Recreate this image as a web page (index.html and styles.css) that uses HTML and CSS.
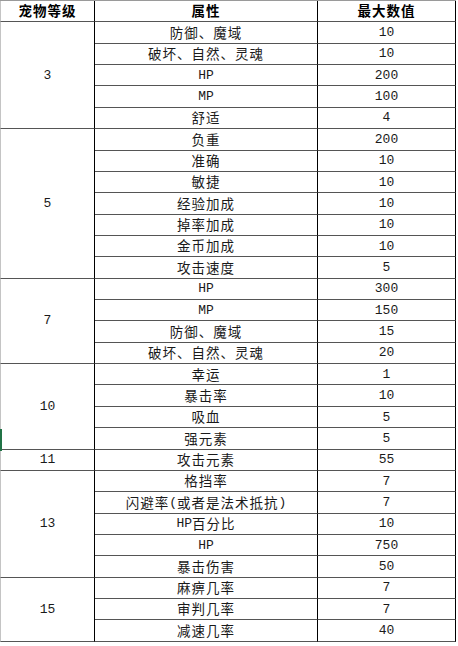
FILE: index.html
```html
<!DOCTYPE html>
<html lang="zh-CN">
<head>
<meta charset="utf-8">
<title>宠物等级属性</title>
<link rel="stylesheet" href="styles.css">
</head>
<body>
<div class="sheet">
  <div class="cell c1 head">宠物等级</div>
  <div class="cell c2 head">属性</div>
  <div class="cell c3 head">最大数值</div>

  <div class="cell c1 span5"><span class="lat">3</span></div>
  <div class="cell c2">防御、魔域</div><div class="cell c3"><span class="lat">10</span></div>
  <div class="cell c2">破坏、自然、灵魂</div><div class="cell c3"><span class="lat">10</span></div>
  <div class="cell c2"><span class="lat">HP</span></div><div class="cell c3"><span class="lat">200</span></div>
  <div class="cell c2"><span class="lat">MP</span></div><div class="cell c3"><span class="lat">100</span></div>
  <div class="cell c2">舒适</div><div class="cell c3"><span class="lat">4</span></div>

  <div class="cell c1 span7"><span class="lat">5</span></div>
  <div class="cell c2">负重</div><div class="cell c3"><span class="lat">200</span></div>
  <div class="cell c2">准确</div><div class="cell c3"><span class="lat">10</span></div>
  <div class="cell c2">敏捷</div><div class="cell c3"><span class="lat">10</span></div>
  <div class="cell c2">经验加成</div><div class="cell c3"><span class="lat">10</span></div>
  <div class="cell c2">掉率加成</div><div class="cell c3"><span class="lat">10</span></div>
  <div class="cell c2">金币加成</div><div class="cell c3"><span class="lat">10</span></div>
  <div class="cell c2">攻击速度</div><div class="cell c3"><span class="lat">5</span></div>

  <div class="cell c1 span4"><span class="lat">7</span></div>
  <div class="cell c2"><span class="lat">HP</span></div><div class="cell c3"><span class="lat">300</span></div>
  <div class="cell c2"><span class="lat">MP</span></div><div class="cell c3"><span class="lat">150</span></div>
  <div class="cell c2">防御、魔域</div><div class="cell c3"><span class="lat">15</span></div>
  <div class="cell c2">破坏、自然、灵魂</div><div class="cell c3"><span class="lat">20</span></div>

  <div class="cell c1 span4"><span class="lat">10</span></div>
  <div class="cell c2">幸运</div><div class="cell c3"><span class="lat">1</span></div>
  <div class="cell c2">暴击率</div><div class="cell c3"><span class="lat">10</span></div>
  <div class="cell c2">吸血</div><div class="cell c3"><span class="lat">5</span></div>
  <div class="cell c2">强元素</div><div class="cell c3"><span class="lat">5</span></div>

  <div class="cell c1"><span class="lat">11</span></div>
  <div class="cell c2">攻击元素</div><div class="cell c3"><span class="lat">55</span></div>

  <div class="cell c1 span5"><span class="lat">13</span></div>
  <div class="cell c2">格挡率</div><div class="cell c3"><span class="lat">7</span></div>
  <div class="cell c2">闪避率<span class="lat">(</span>或者是法术抵抗<span class="lat">)</span></div><div class="cell c3"><span class="lat">7</span></div>
  <div class="cell c2"><span class="lat">HP</span>百分比</div><div class="cell c3"><span class="lat">10</span></div>
  <div class="cell c2"><span class="lat">HP</span></div><div class="cell c3"><span class="lat">750</span></div>
  <div class="cell c2">暴击伤害</div><div class="cell c3"><span class="lat">50</span></div>

  <div class="cell c1 span3"><span class="lat">15</span></div>
  <div class="cell c2">麻痹几率</div><div class="cell c3"><span class="lat">7</span></div>
  <div class="cell c2">审判几率</div><div class="cell c3"><span class="lat">7</span></div>
  <div class="cell c2">减速几率</div><div class="cell c3"><span class="lat">40</span></div>

  <div class="marker"></div>
</div>
</body>
</html>
```

FILE: styles.css
```css
html, body {
  margin: 0;
  padding: 0;
  background: #ffffff;
}

body {
  font-family: "Noto Sans CJK SC", "Noto Sans", sans-serif;
  font-size: 13.5px;
  letter-spacing: 1px;
  color: #1a1a1a;
}

.sheet {
  position: relative;
  display: grid;
  grid-template-columns: 95px 223px 138px;
  grid-template-rows: repeat(30, 21.37px);
  width: 456px;
  border-top: 1px solid #9a9a9a;
}

.cell {
  display: flex;
  align-items: center;
  justify-content: center;
  line-height: 1;
  white-space: nowrap;
  border-bottom: 1px solid #555555;
  border-right: 1px solid #000000;
  overflow: hidden;
}

.c1 {
  grid-column: 1;
  border-left: 1px solid #c4c4c4;
}

.c2 {
  grid-column: 2;
}

.c3 {
  grid-column: 3;
}

.span3 { grid-row: span 3; }
.span4 { grid-row: span 4; }
.span5 { grid-row: span 5; }
.span7 { grid-row: span 7; }

.head {
  font-weight: 700;
  color: #000000;
}

.lat {
  font-family: "Liberation Mono", "DejaVu Sans Mono", monospace;
  font-size: 13px;
  letter-spacing: 0;
}

.marker {
  position: absolute;
  left: 0;
  top: 428px;
  width: 2px;
  height: 22px;
  background: #217346;
}
```
